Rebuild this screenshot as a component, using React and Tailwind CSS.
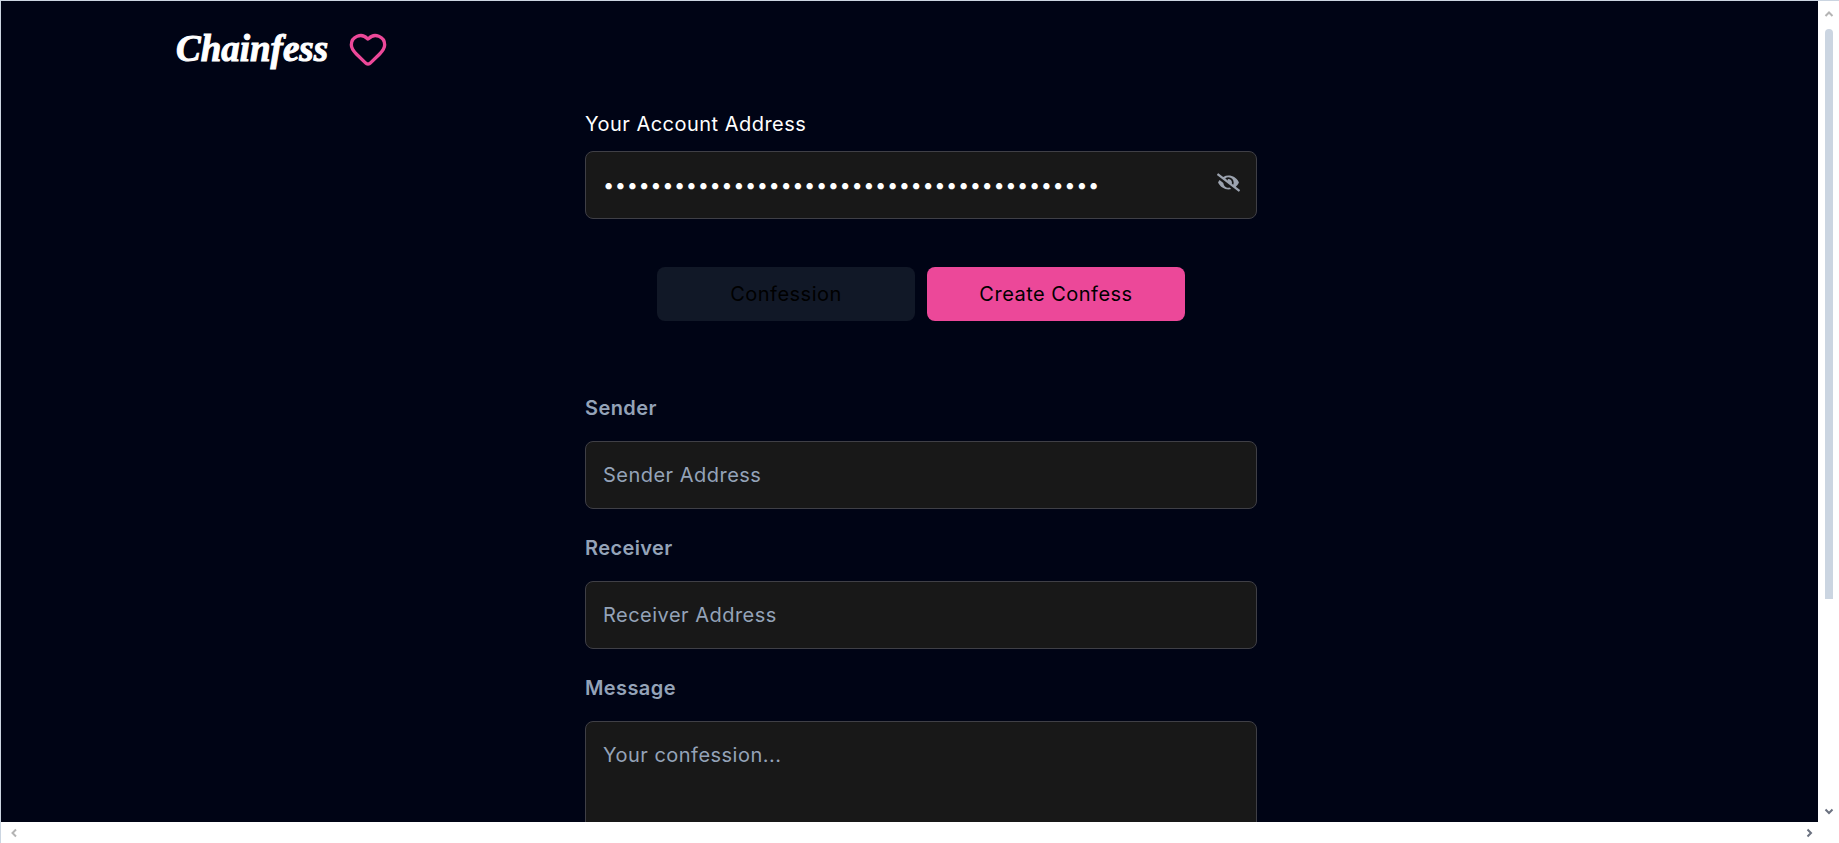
import React from 'react';
import { Heart } from 'lucide-react';
import { FaEyeSlash } from 'react-icons/fa';

const inputClass =
  "w-full h-[68px] px-[17px] bg-[#181818] border border-[#3f3f46] rounded-lg text-[20px] tracking-[0.48px] text-white placeholder:text-[#94a3b8] outline-none font-['Inter',sans-serif]";

const Field = ({ label, placeholder }) => (
  <div className="mb-6">
    <label className="block pt-px mb-[19px] text-[20px] leading-7 tracking-[0.4px] font-semibold text-[#94a3b8]">{label}</label>
    <input type="text" placeholder={placeholder} className={inputClass} />
  </div>
);

const Arrow = ({ d, className }) => (
  <svg width="10" height="10" viewBox="0 0 10 10" className={className}>
    <path d={d} fill="none" stroke="currentColor" strokeWidth="2" />
  </svg>
);

export default function App() {
  return (
    <div className="h-screen flex flex-col overflow-hidden bg-white border-t border-l border-[#cbd5e1] font-['Inter',sans-serif]">
      <div className="flex flex-1 min-h-0">
        <div className="flex-1 min-w-0 overflow-hidden bg-[#000415]">
          <div className="w-[1840px]">
            <header className="h-[108px] pl-[175px] pb-[13px] flex items-center gap-[20px]">
              <h1 className="font-['Liberation_Serif',serif] italic font-bold text-[37px] leading-none text-white [-webkit-text-stroke:1px_white]">Chainfess</h1>
              <Heart size={40} strokeWidth={2} className="text-[#ec4899]" />
            </header>

            <main className="w-[672px] mx-auto">
              <label className="block pt-px mb-[13px] text-[20px] leading-7 tracking-[0.48px] text-white">Your Account Address</label>
              <div className="relative">
                <input
                  type="password"
                  defaultValue="0x71C7656EC7ab88b098defB751B7401B5f6d8976F"
                  className={`${inputClass} tracking-[0.58px]`}
                />
                <FaEyeSlash className="absolute right-[17px] top-[20px] text-[#9ca3af]" size={23} />
              </div>

              <div className="flex justify-center gap-3 mt-12 mb-[72px]">
                <button className="w-[258px] h-[54px] rounded-lg bg-[#111827] text-[20px] tracking-[0.48px] text-black">Confession</button>
                <button className="w-[258px] h-[54px] rounded-lg bg-[#ec4899] text-[20px] tracking-[0.48px] text-black">Create Confess</button>
              </div>

              <Field label="Sender" placeholder="Sender Address" />
              <Field label="Receiver" placeholder="Receiver Address" />
              <label className="block pt-px mb-[19px] text-[20px] leading-7 tracking-[0.4px] font-semibold text-[#94a3b8]">Message</label>
              <textarea
                rows={5}
                placeholder="Your confession..."
                className="w-full px-[17px] py-[18px] bg-[#181818] border border-[#3f3f46] rounded-lg text-[20px] tracking-[0.48px] text-white placeholder:text-[#94a3b8] outline-none resize-none"
              />
            </main>
          </div>
        </div>

        {/* vertical scrollbar */}
        <div className="w-[21px] shrink-0 bg-white flex flex-col items-center pt-2">
          <Arrow d="M1.5 7 L5 3.5 L8.5 7" className="text-[#b4b4b4]" />
          <div className="w-2 h-[570px] mt-[10px] rounded-t bg-[#cbd5e1]" />
          <div className="flex-1" />
          <Arrow d="M1.5 3.5 L5 7 L8.5 3.5" className="text-[#6b7280] mb-[6px]" />
        </div>
      </div>

      {/* horizontal scrollbar */}
      <div className="h-[21px] shrink-0 bg-white flex items-center justify-between pl-[8px] pr-[6px]">
        <Arrow d="M7 1.5 L3.5 5 L7 8.5" className="text-[#b4b4b4]" />
        <Arrow d="M3.5 1.5 L7 5 L3.5 8.5" className="text-[#6b7280] mr-[19px]" />
      </div>
    </div>
  );
}
